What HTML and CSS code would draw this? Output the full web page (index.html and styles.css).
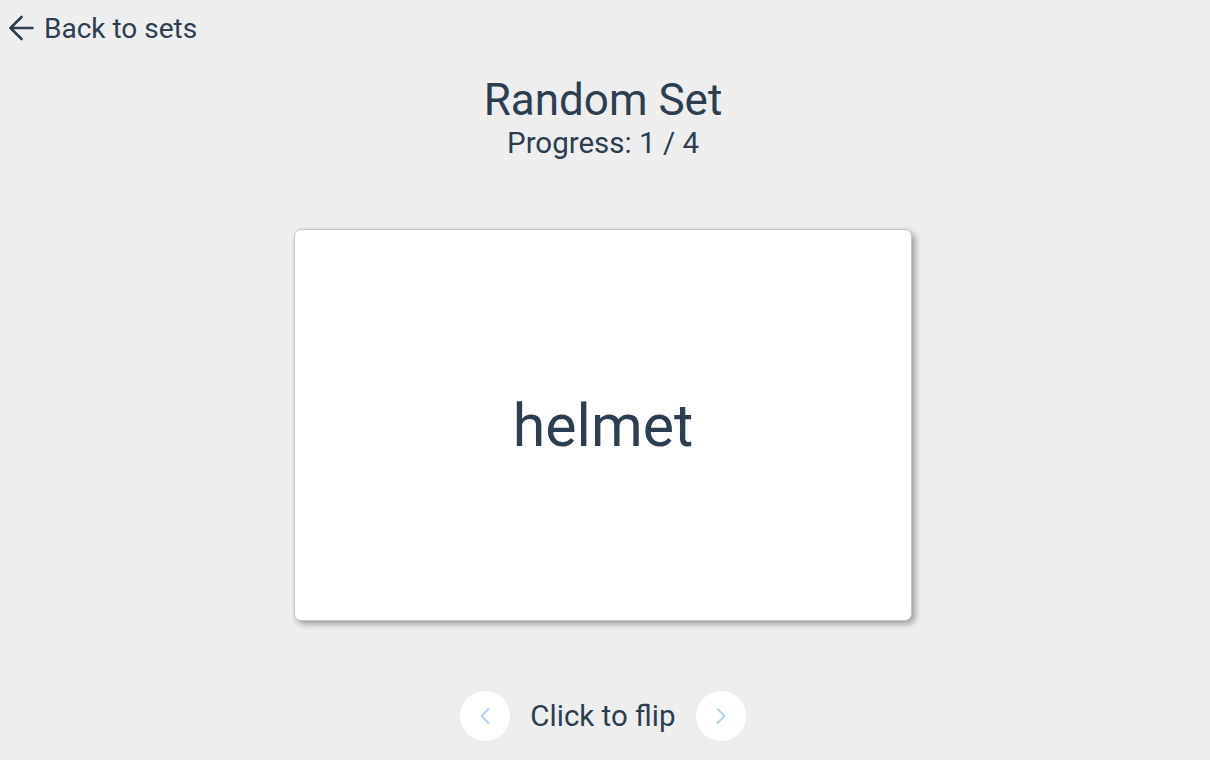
FILE: index.html
```html
<!DOCTYPE html>
<html>
<head>
<meta charset="utf-8">
<link rel="stylesheet" href="styles.css">
</head>
<body>
<div class="page">
  <a class="back" href="#">
    <svg class="back-icon" viewBox="0 0 26 26"><path d="M24.5 13H2.5M13.5 2L2.5 13l11 11" fill="none" stroke="#2c3e50" stroke-width="2.6" stroke-linecap="round" stroke-linejoin="round"/></svg>
    <span>Back to sets</span>
  </a>
  <header class="head">
    <h1 class="title">Random Set</h1>
    <div class="progress">Progress: 1 / 4</div>
  </header>
  <div class="card-wrap">
    <div class="card"><span class="word">helmet</span></div>
  </div>
  <div class="controls">
    <button class="nav"><svg width="14" height="18" viewBox="0 0 14 18"><path d="M10.5 2L3.5 9l7 7" fill="none" stroke="#acd0f4" stroke-width="1.8" stroke-linecap="round" stroke-linejoin="round"/></svg></button>
    <span class="flip">Click to flip</span>
    <button class="nav"><svg width="14" height="18" viewBox="0 0 14 18"><path d="M3.5 2l7 7-7 7" fill="none" stroke="#acd0f4" stroke-width="1.8" stroke-linecap="round" stroke-linejoin="round"/></svg></button>
  </div>
</div>
</body>
</html>
```
FILE: styles.css
```css
html, body { margin: 0; padding: 0; }
body {
  background: #eeeeee;
  font-family: Roboto, "Liberation Sans", sans-serif;
  color: #2c3e50;
  width: 1210px;
  height: 760px;
  overflow: hidden;
}
.page { display: flex; flex-direction: column; padding-right: 4px; }
.back {
  display: flex; align-items: center; gap: 10px;
  color: #2c3e50; text-decoration: none;
  font-size: 28px;
  padding: 13px 0 0 8px;
  height: 30px;
}
.back-icon { width: 26px; height: 26px; }
.head { display: flex; flex-direction: column; align-items: center; margin-top: 34px; }
.title { margin: 0; font-weight: 400; font-size: 44px; line-height: 46px; }
.progress { font-size: 29.5px; line-height: 36px; margin-top: 2px; }
.card-wrap { display: flex; justify-content: center; margin-top: 68px; }
.card {
  width: 616px; height: 390px;
  background: #fff;
  border: 1px solid #c4c4c4;
  border-radius: 7px;
  box-shadow: 3px 3px 6px rgba(0,0,0,0.35);
  display: flex; align-items: center; justify-content: center;
}
.word { font-size: 59px; }
.controls { display: flex; justify-content: center; align-items: center; gap: 20px; margin-top: 70px; }
.nav {
  width: 50px; height: 50px; border-radius: 50%;
  background: #fff; border: none; padding: 0;
  display: flex; align-items: center; justify-content: center;
}
.flip { font-size: 29.5px; }
```
